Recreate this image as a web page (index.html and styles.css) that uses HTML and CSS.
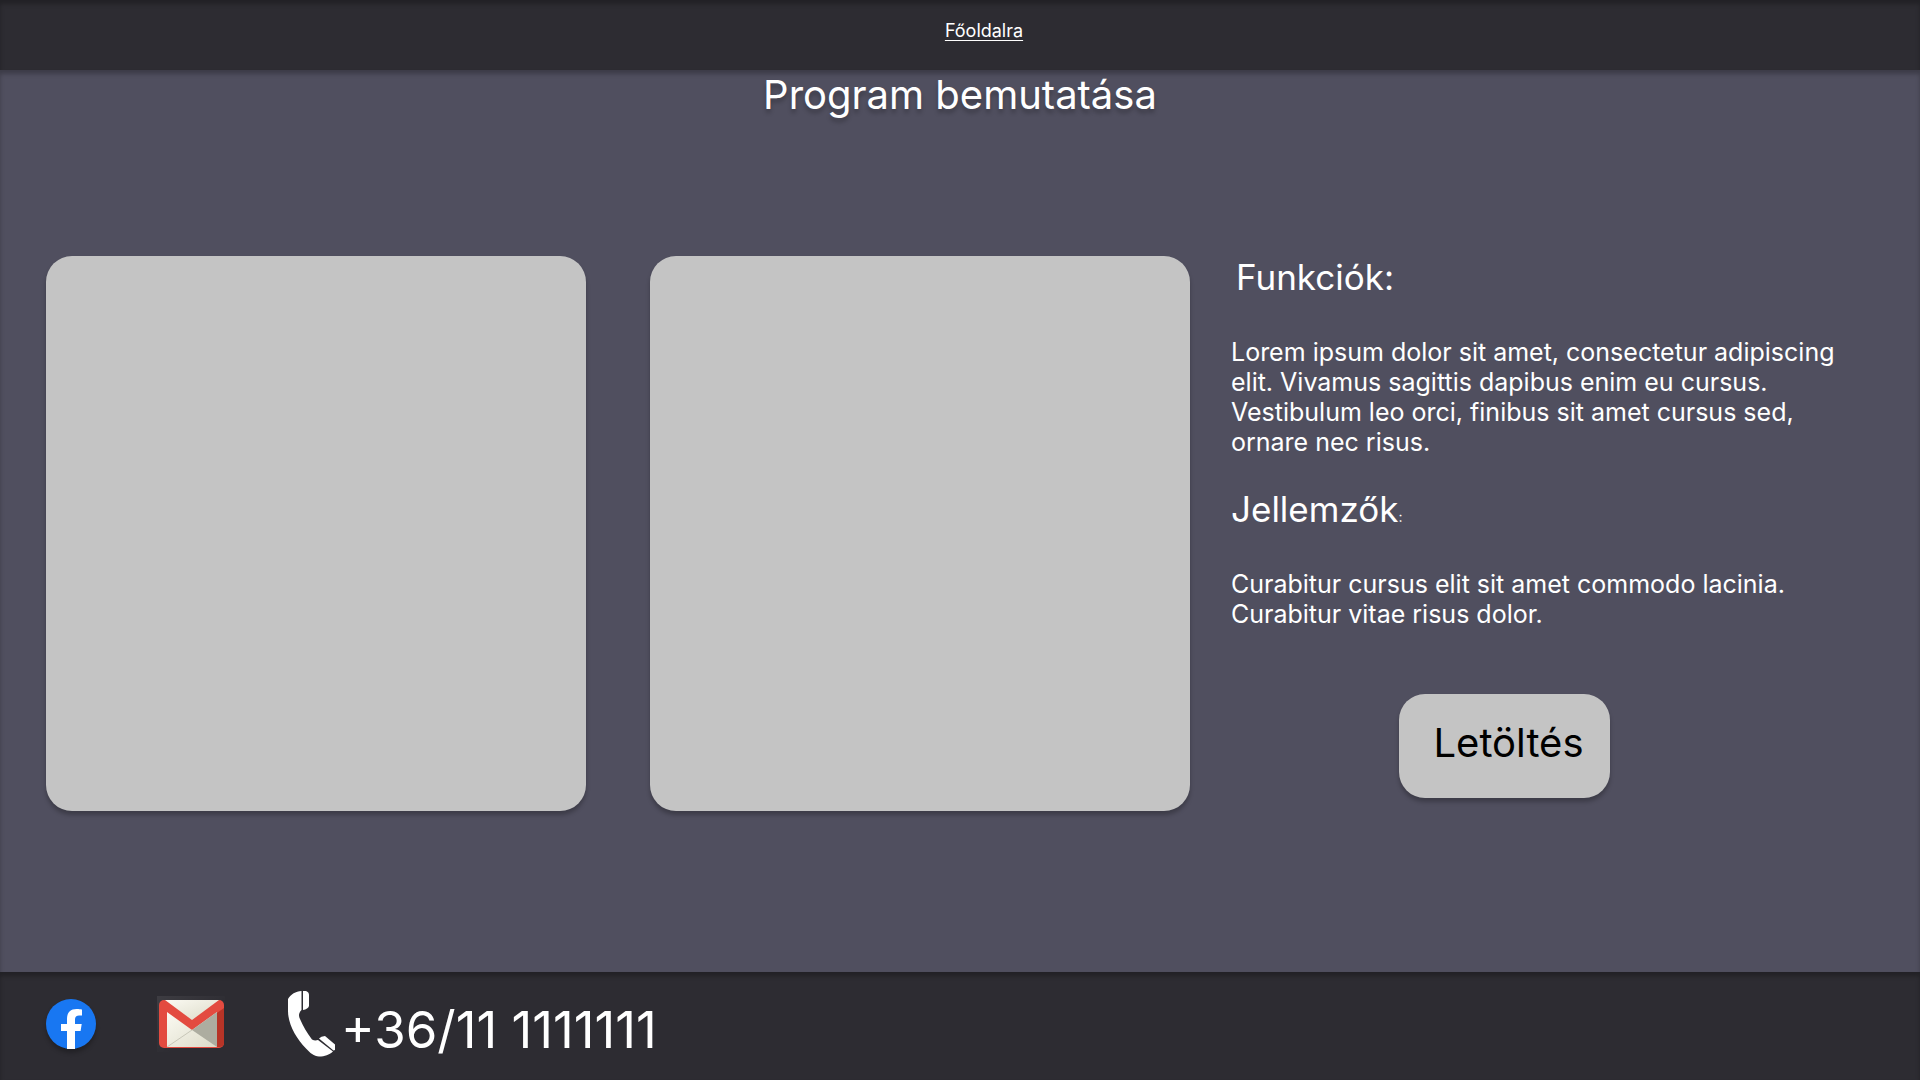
FILE: index.html
```html
<!DOCTYPE html>
<html lang="hu">
<head>
  <meta charset="utf-8">
  <meta name="viewport" content="width=device-width, initial-scale=1">
  <title>Program bemutatása</title>
  <link rel="stylesheet" href="styles.css">
</head>
<body>
  <header class="topbar">
    <a class="topbar-link" href="#">Főoldalra</a>
  </header>

  <main class="content">
    <h1 class="title">Program bemutatása</h1>
    <div class="columns">
      <div class="card"></div>
      <div class="card"></div>
      <section class="details">
        <h2 class="heading heading-indent">Funkciók:</h2>
        <p class="text">Lorem ipsum dolor sit amet, consectetur adipiscing elit. Vivamus sagittis dapibus enim eu cursus. Vestibulum leo orci, finibus sit amet cursus sed, ornare nec risus.</p>
        <h2 class="heading">Jellemzők<span class="colon">:</span></h2>
        <p class="text">Curabitur cursus elit sit amet commodo lacinia. Curabitur vitae risus dolor.</p>
        <button class="download" type="button">Letöltés</button>
      </section>
    </div>
  </main>

  <footer class="footer">
    <a class="facebook" href="#" aria-label="Facebook">
      <svg class="icon" width="50" height="50" viewBox="0 0 50 50" aria-hidden="true">
        <circle cx="25" cy="25" r="25" fill="#1877f2"/>
        <path d="M21 50V32H15V25H21V20C21 13.500 24.500 10 30.500 10C33 10 36 10.500 36 10.500V16.500H33C30 16.500 29 18.300 29 20.500V25H35.700L34.600 32H29V50C26.500 50.300 23.500 50.300 21 50Z" fill="#fff"/>
      </svg>
    </a>
    <a class="gmail" href="#" aria-label="Gmail">
      <svg class="icon" width="68" height="56" viewBox="0 0 68 56" aria-hidden="true">
        <defs>
          <linearGradient id="paper" x1="0" y1="0" x2="1" y2="1">
            <stop offset="0" stop-color="#fbfaf2"/>
            <stop offset="1" stop-color="#dcdbc9"/>
          </linearGradient>
          <linearGradient id="sheen" x1="0" y1="0" x2="1" y2="1">
            <stop offset="0" stop-color="#fff" stop-opacity="0.08"/>
            <stop offset="0.6" stop-color="#fff" stop-opacity="0"/>
          </linearGradient>
        </defs>
        <rect width="68" height="56" fill="url(#sheen)"/>
        <rect x="2" y="4" width="65" height="48" rx="5" fill="#e34b40"/>
        <path d="M67 12V47Q67 51 62 51H60V17Z" fill="#b73427"/>
        <path d="M8 4H62L35 24Z" fill="url(#paper)"/>
        <path d="M10 16L35 34L60 16V51H10Z" fill="url(#paper)"/>
        <path d="M35 34L60 16V51Z" fill="#adada0"/>
        <path d="M35 34L10 51" fill="none" stroke="#c8c7b9"/>
      </svg>
    </a>
    <a class="phone" href="tel:+36111111111">
      <svg class="icon" width="48" height="66" viewBox="0 0 48 66" aria-hidden="true">
        <path d="M13.500 0V19C10.500 22 10.500 25 12 28C15 35 19 42 24 48.500C26.500 50 28.500 49.500 30 49L45 60.500C41 64 37 65.500 31 65.500C26 65 22 62 18 57.500C8 47 0 33 0 20V8C3 3 7.500 0.500 13.500 0Z" fill="#fff"/>
        <path d="M15 0H18Q21 1 21 4V15Q20 18 15 19Z" fill="#fff"/>
        <path d="M31 47.500Q33 45 37 45L47 53.500V59L45.500 59.500Z" fill="#fff"/>
      </svg>
      <span class="phone-number">+36/11 1111111</span>
    </a>
  </footer>
</body>
</html>
```
FILE: styles.css
```css
* {
  box-sizing: border-box;
}

body {
  display: flex;
  flex-direction: column;
  min-height: 100vh;
  margin: 0;
  background: #504f5f;
  color: #fff;
  font-family: Inter, "Liberation Sans", sans-serif;
  font-weight: 400;
  font-optical-sizing: none;
}

h1,
h2,
p {
  margin: 0;
  font-weight: inherit;
}

a {
  color: inherit;
}

.icon {
  display: block;
}

.topbar {
  display: flex;
  justify-content: center;
  padding: 20px 0 28px 48px;
  background: #2d2c32;
  box-shadow: inset 0 4px 4px rgba(0, 0, 0, 0.25);
}

.topbar-link {
  font-size: 18px;
  line-height: 22px;
  text-underline-offset: 3px;
}

.content {
  flex: 1;
  padding: 0 46px 48px;
  box-shadow: inset 0 4px 4px rgba(0, 0, 0, 0.25);
}

.title {
  margin-bottom: 136px;
  font-size: 40px;
  line-height: 50px;
  text-align: center;
  text-shadow: 0 4px 4px rgba(0, 0, 0, 0.25);
}

.columns {
  display: grid;
  grid-template-columns: 540fr 540fr 620fr;
  column-gap: 64px;
}

.card {
  min-height: 555px;
  border-radius: 26px;
  background: #c4c4c4;
  box-shadow: 0 4px 4px rgba(0, 0, 0, 0.25);
}

.details {
  display: flex;
  flex-direction: column;
  margin-left: -23px;
}

.heading {
  margin-bottom: 38px;
  font-size: 35px;
  line-height: 43px;
}

.heading-indent {
  padding-left: 5px;
}

.colon {
  font-size: 14px;
  line-height: 1;
}

.text {
  margin-bottom: 31px;
  padding-right: 32px;
  font-size: 25px;
  line-height: 30px;
}

.download {
  align-self: center;
  margin: 34px 96px 0 0;
  padding: 25px 26px 31px 34px;
  border: 0;
  border-radius: 26px;
  background: #c4c4c4;
  box-shadow: 0 4px 4px rgba(0, 0, 0, 0.25);
  color: #000;
  font: inherit;
  font-size: 40px;
  line-height: 48px;
}

.footer {
  display: flex;
  align-items: center;
  min-height: 108px;
  padding: 0 46px 4px;
  background: #2d2c32;
  box-shadow: inset 0 4px 4px rgba(0, 0, 0, 0.25);
}

.facebook {
  border-radius: 50%;
  box-shadow: 0 4px 4px rgba(0, 0, 0, 0.25);
}

.gmail {
  margin: 0 63px 0 61px;
}

.phone {
  display: flex;
  align-items: center;
  gap: 5px;
  text-decoration: none;
}

.phone-number {
  padding-top: 12px;
  font-size: 51px;
  line-height: 60px;
}
```
